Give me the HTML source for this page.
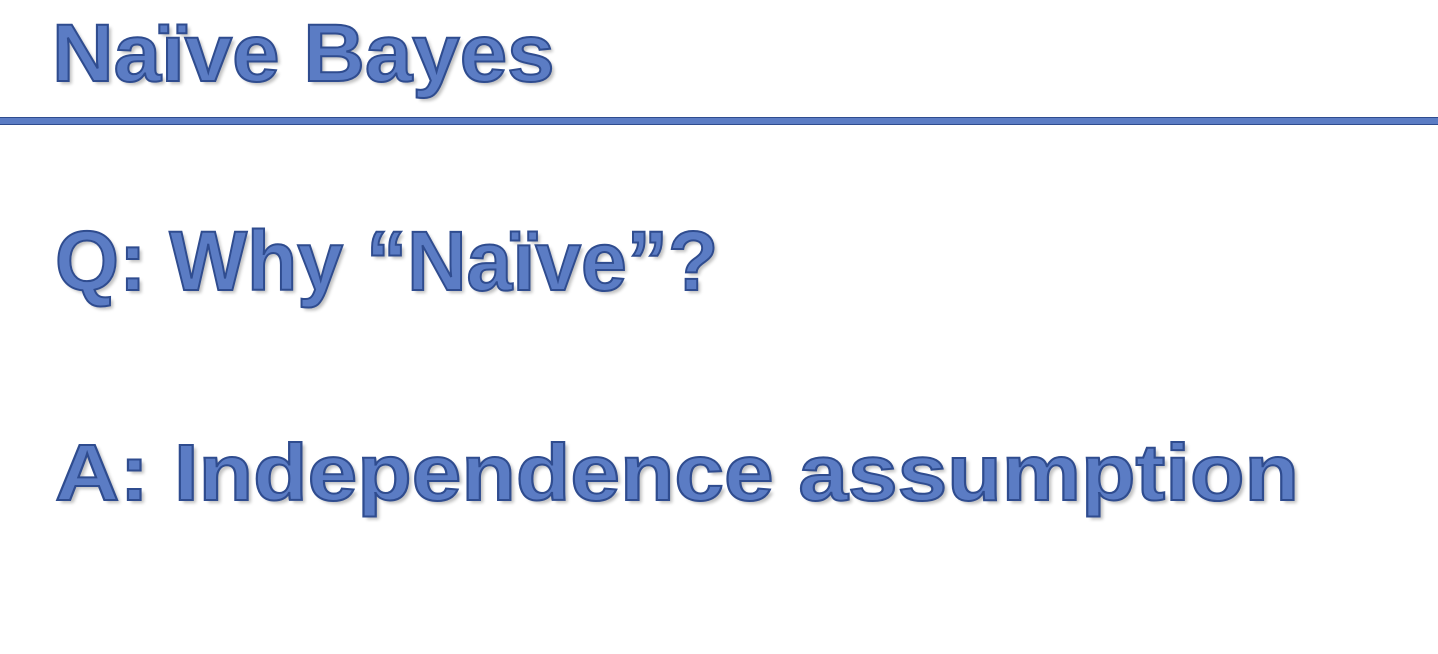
<!DOCTYPE html>
<html><head><style>
body{margin:0;width:1438px;height:654px;background:#fff;overflow:hidden;position:relative;font-family:"Liberation Sans",sans-serif;}
.t{position:absolute;font-weight:bold;color:#5b7cc4;-webkit-text-stroke:2px #2f4c8f;text-shadow:3px 3px 3px rgba(0,0,0,0.25);white-space:nowrap;transform-origin:0 0;line-height:1;}
.line{position:absolute;left:0;top:117px;width:1438px;height:8px;background:#5b7cc4;border-top:1px solid #2f4c8f;border-bottom:1px solid #2f4c8f;box-sizing:border-box;}
</style></head><body>
<div class="t" style="left:52px;top:13px;font-size:82px;transform:scaleX(1.04)">Naïve Bayes</div>
<div class="line"></div>
<div class="t" style="left:55px;top:219px;font-size:84px;transform:scaleX(0.98)">Q: Why “Naïve”?</div>
<div class="t" style="left:55px;top:433px;font-size:80px;transform:scaleX(1.115)">A: Independence assumption</div>
</body></html>
